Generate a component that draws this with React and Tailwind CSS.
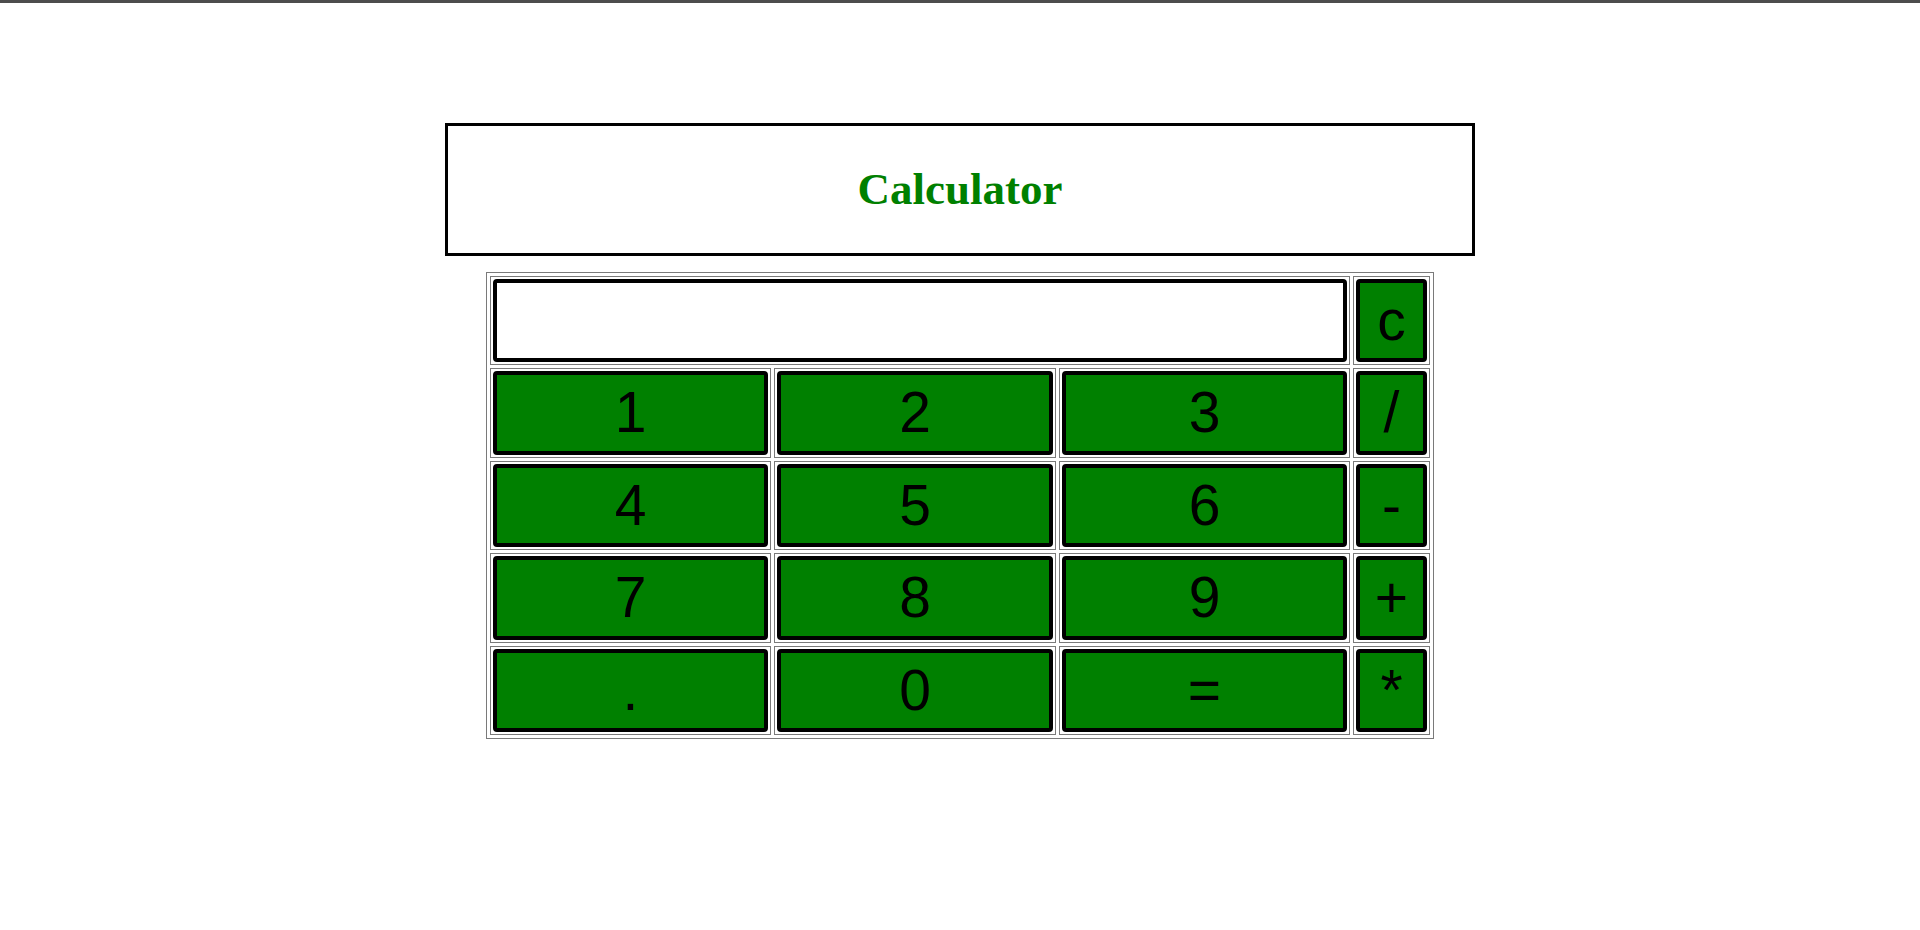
import { useState } from 'react'

const ROWS = [
  ['1', '2', '3', '/'],
  ['4', '5', '6', '-'],
  ['7', '8', '9', '+'],
  ['.', '0', '=', '*'],
]

function Cell({ children, className = '' }) {
  return (
    <div className={`border border-[#7a7a7a] p-[2px] h-[89.4px] ${className}`}>
      {children}
    </div>
  )
}

function Key({ label, onClick }) {
  return (
    <button
      onClick={() => onClick(label)}
      className="w-full h-full flex items-center justify-center bg-[#008000] border-[4px] border-black rounded-[4px] text-black text-[57px] leading-normal font-['Liberation_Sans',Arial,sans-serif] cursor-pointer"
    >
      {label}
    </button>
  )
}

export default function App() {
  const [value, setValue] = useState('')

  const press = (k) => {
    if (k === 'c') return setValue('')
    if (k === '=') {
      try {
        // quick and dirty, same as the original page did
        setValue(String(Function('return (' + value + ')')()))
      } catch {
        setValue('Error')
      }
      return
    }
    setValue((v) => v + k)
  }

  return (
    <div className="min-h-[930px] bg-white flex flex-col items-center">
      <div className="w-full h-[3px] bg-[#4d4d4d]" />

      <div className="mt-[120px] w-[1030px] h-[133px] border-[3px] border-black flex items-center justify-center">
        <span className="text-[45px] font-bold text-[#008000] font-['Liberation_Serif','Times_New_Roman',serif]">
          Calculator
        </span>
      </div>

      <div className="mt-[16px] border border-[#7a7a7a] p-[3px] grid grid-cols-[281px_282px_291px_77px] gap-[3px]">
        <Cell className="col-span-3">
          <input
            type="text"
            value={value}
            readOnly
            className="w-full h-full bg-white border-[4px] border-black rounded-[4px] px-2 text-[40px] text-right font-['Liberation_Sans',Arial,sans-serif] outline-none"
          />
        </Cell>
        <Cell>
          <Key label="c" onClick={press} />
        </Cell>
        {ROWS.map((row) =>
          row.map((k) => (
            <Cell key={k}>
              <Key label={k} onClick={press} />
            </Cell>
          ))
        )}
      </div>
    </div>
  )
}
